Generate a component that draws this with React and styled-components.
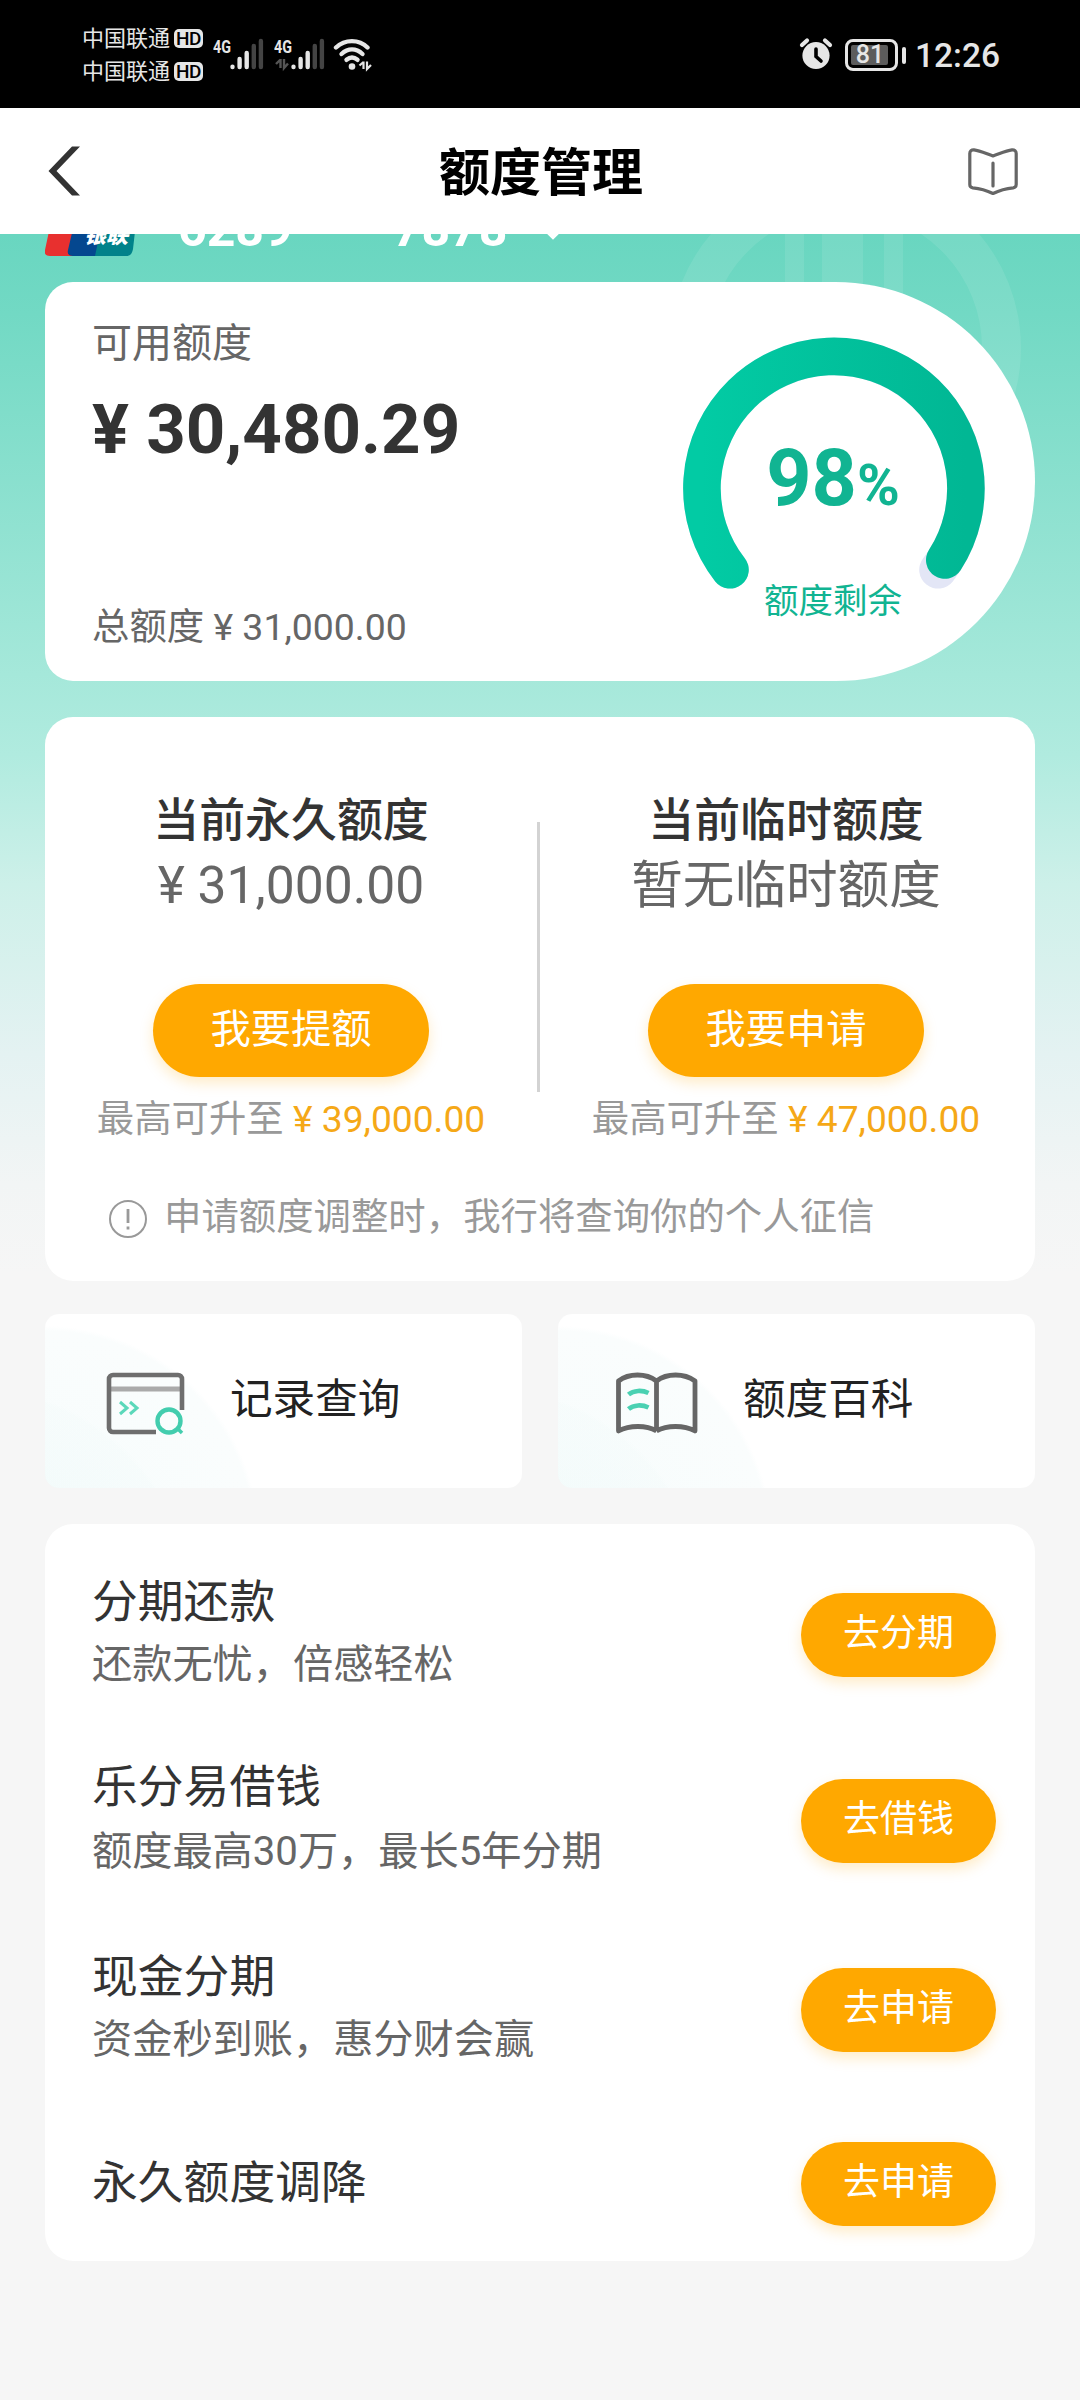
import React from 'react';
import styled, { createGlobalStyle } from 'styled-components';

const GlobalStyle = createGlobalStyle`
  * {
    box-sizing: border-box;
  }

  body {
    margin: 0;
    background: #f6f6f6;
    font-family: Roboto, 'Noto Sans CJK SC', sans-serif;
    color: #333;
  }
`;

const Page = styled.div`
  width: 1080px;
  height: 2400px;
  overflow: hidden;
  background: #f6f6f6;
`;

/* ---------- status bar ---------- */

const StatusBar = styled.div`
  display: flex;
  justify-content: space-between;
  height: 108px;
  padding: 0 80px 0 82px;
  background: #000;
  color: #e6e6e6;
`;

const StatusGroup = styled.div`
  display: flex;
  align-items: flex-start;
`;

const Carriers = styled.div`
  padding-top: 22px;
`;

const Carrier = styled.div`
  display: flex;
  align-items: center;
  gap: 4px;
  height: 33px;
  font-size: 22px;
  line-height: 33px;
`;

const HdBadge = styled.span`
  display: flex;
  align-items: center;
  justify-content: center;
  width: 29px;
  height: 19px;
  border-radius: 5px;
  background: #e6e6e6;
  color: #000;
  font-size: 19px;
  font-weight: 500;
  line-height: 19px;
  letter-spacing: -0.5px;
`;

const StatusIcon = styled.svg`
  display: block;
  margin-top: ${(p) => p.$top}px;
  margin-left: ${(p) => p.$left || 0}px;
`;

const Battery = styled.div`
  display: flex;
  align-items: center;
  gap: 4px;
  margin: 39px 0 0 12px;

  &::after {
    content: '';
    width: 4px;
    height: 17px;
    border-radius: 2px;
    background: #e6e6e6;
  }
`;

const BatteryBody = styled.div`
  width: 53px;
  height: 32px;
  padding: 3px;
  border: 3px solid #e6e6e6;
  border-radius: 8px;
`;

const BatteryLevel = styled.div`
  width: 37px;
  height: 20px;
  padding-left: 1px;
  border-radius: 2px;
  background: #5c5c5c;
  font-size: 25px;
  font-weight: 500;
  line-height: 20px;
  text-align: center;
`;

const Clock = styled.div`
  margin: 35px 0 0 9px;
  font-size: 33.5px;
  font-weight: 500;
  line-height: 42px;
`;

/* ---------- header ---------- */

const Header = styled.header`
  display: flex;
  align-items: center;
  justify-content: space-between;
  height: 126px;
  padding: 0 62px 0 48px;
  background: #fff;
`;

const HeaderTitle = styled.h1`
  margin: 5px 0 0 33px;
  color: #000;
  font-size: 51px;
  font-weight: 600;
  line-height: 70px;
`;

/* ---------- body ---------- */

const Body = styled.main`
  position: relative;
  height: 2166px;
  padding: 0 45px;
  overflow: hidden;
  background: linear-gradient(
    #69d6c0 0,
    #72d9c4 80px,
    #a5e8da 440px,
    #b0ebdf 520px,
    #cdf0e9 650px,
    #e4f2f2 820px,
    #f2f5f5 950px,
    #f6f6f6 1040px
  );
`;

const Watermark = styled.svg`
  position: absolute;
  top: 0;
  right: 50px;
`;

const CardNumberRow = styled.div`
  position: relative;
  display: flex;
  align-items: flex-end;
  height: 56px;
  margin-top: -33px;
  margin-bottom: 25px;
  color: #fff;
  font-size: 50px;
  font-weight: 700;
  line-height: 56px;
`;

const CardDigits = styled.span`
  margin-left: ${(p) => p.$gap}px;
`;

const UnionPay = styled.svg`
  display: block;
`;

const Chevron = styled.svg`
  margin: 0 0 17px 34px;
`;

const Card = styled.section`
  position: relative;
  border-radius: 28px;
  background: #fff;
`;

const AvailableCard = styled(Card)`
  display: flex;
  justify-content: space-between;
  height: 399px;
  padding: 32px 49px 29px 47px;
  border-radius: 28px 200px 200px 28px;
`;

const AvailableInfo = styled.div`
  display: flex;
  flex-direction: column;
`;

const Label = styled.div`
  color: #666;
  font-size: 40px;
  line-height: 60px;
`;

const Available = styled.div`
  margin-top: 16px;
  font-size: 69px;
  font-weight: 700;
  line-height: 80px;
`;

const Total = styled.div`
  margin-top: auto;
  color: #666;
  font-size: 37.4px;
  line-height: 50px;
`;

const GaugeBox = styled.div`
  position: relative;
  width: 304px;
  height: 304px;
  margin-top: 22px;
`;

const GaugeText = styled.div`
  position: absolute;
  top: 96px;
  left: -1px;
  width: 100%;
  color: #11b492;
  text-align: center;
`;

const Percent = styled.div`
  font-size: 79px;
  font-weight: 700;
  line-height: 92px;

  small {
    font-size: 58px;
    font-weight: 700;
  }
`;

const GaugeLabel = styled.div`
  margin-top: 47px;
  font-size: 34.5px;
  line-height: 46px;
`;

const LimitCard = styled(Card)`
  height: 564px;
  margin-top: 36px;
  padding-top: 73px;
`;

const Columns = styled.div`
  display: flex;
  padding-right: 3px;
`;

const Column = styled.div`
  display: flex;
  flex: 1;
  flex-direction: column;
  align-items: center;
`;

const Divider = styled.div`
  width: 3px;
  height: 270px;
  margin-top: 32px;
  background: #d3d3d3;
`;

const ColumnTitle = styled.div`
  font-size: 45.9px;
  font-weight: 500;
  line-height: 60px;
`;

const ColumnValue = styled.div`
  margin-top: 1px;
  color: #666;
  font-size: 51.6px;
  line-height: 70px;
`;

const Button = styled.button`
  width: ${(p) => (p.$large ? 276 : 195)}px;
  height: ${(p) => (p.$large ? 93 : 84)}px;
  padding: 0 0 11px;
  border: 0;
  border-radius: 47px;
  background: #ffa800;
  box-shadow: 0 6px 14px rgba(255, 168, 0, 0.22);
  color: #fff;
  font-family: inherit;
  font-size: ${(p) => (p.$large ? 40.3 : 37)}px;
`;

const ColumnButton = styled(Button)`
  margin-top: 63px;
`;

const Hint = styled.div`
  margin-top: 17px;
  color: #999;
  font-size: 37.4px;
  line-height: 50px;
  white-space: nowrap;

  b {
    color: #f5a817;
    font-size: 37.2px;
    font-weight: 400;
  }
`;

const Note = styled.div`
  display: flex;
  align-items: center;
  gap: 17px;
  margin: 48px 0 0 64px;
  color: #999;
  font-size: 37.4px;
  line-height: 50px;
`;

const NoteIcon = styled.svg`
  margin-top: 4px;
`;

const Tiles = styled.div`
  display: grid;
  grid-template-columns: 1fr 1fr;
  gap: 36px;
  margin-top: 33px;
`;

const Tile = styled.div`
  display: flex;
  align-items: center;
  gap: 44px;
  height: 174px;
  padding-left: 57px;
  border-radius: 14px;
  background:
    radial-gradient(circle at -70px 290px, rgba(232, 248, 246, 0.45) 0, rgba(240, 250, 249, 0.25) 212px, transparent 216px),
    radial-gradient(circle at 0 226px, #f6fcfc 0, #fafdfd 209px, #fff 214px);
  color: #222;
  font-size: 42.6px;

  svg {
    margin-top: 5px;
  }
`;

const TileName = styled.span`
  margin-top: -11px;
`;

const List = styled(Card)`
  height: 737px;
  margin-top: 36px;
  padding: 18px 39px 0 47px;
`;

const Row = styled.div`
  display: flex;
  align-items: center;
  justify-content: space-between;
  height: ${(p) => p.$height}px;
`;

const RowTitle = styled.div`
  font-size: 45.8px;
  line-height: 62px;
`;

const RowText = styled.div`
  margin-top: ${(p) => p.$gap}px;
  margin-bottom: 4px;
  color: #666;
  font-size: 40.2px;
  line-height: 60px;
`;

const limits = [
  { title: '当前永久额度', value: '¥ 31,000.00', action: '我要提额', max: '¥ 39,000.00' },
  { title: '当前临时额度', value: '暂无临时额度', action: '我要申请', max: '¥ 47,000.00' },
];

const services = [
  { title: '分期还款', text: '还款无忧，倍感轻松', action: '去分期', height: 186, gap: 1 },
  { title: '乐分易借钱', text: '额度最高30万，最长5年分期', action: '去借钱', height: 186, gap: 3 },
  { title: '现金分期', text: '资金秒到账，惠分财会赢', action: '去申请', height: 192, gap: 1 },
  { title: '永久额度调降', action: '去申请', height: 156 },
];

function Signal({ left, data }) {
  return (
    <StatusIcon $top={36} $left={left} width="52" height="36" viewBox="0 0 52 36">
      <text x="0" y="17" fontSize="18.5" fontWeight="700" fill="#e6e6e6" textLength="18" lengthAdjust="spacingAndGlyphs">
        4G
      </text>
      {data && <path d="M6.500 23v9M6.500 23.500l-4.500 4.500M10 23v9l4-4.500" stroke="#555" strokeWidth="2.400" fill="none" />}
      <g strokeWidth="4.400" strokeLinecap="round" stroke="#e6e6e6">
        <path d="M19.500 30.800v.2M26.600 23v8M33.700 17v14" />
        <path d="M40.800 10v21M47.900 5v26" stroke="#444" />
      </g>
    </StatusIcon>
  );
}

function Gauge() {
  return (
    <svg width="304" height="304" viewBox="0 0 304 304">
      <defs>
        <linearGradient id="arc" x1="0" x2="1">
          <stop offset="0" stopColor="#02cba4" />
          <stop offset="1" stopColor="#01b794" />
        </linearGradient>
      </defs>
      <g fill="none" strokeWidth="37.6" strokeLinecap="round">
        <path d="M48 233.8A132 132 0 1 1 256 233.8" stroke="#e3e6f6" />
        <path d="M48 233.8A132 132 0 1 1 262.8 224" stroke="url(#arc)" />
      </g>
    </svg>
  );
}

function RecordIcon() {
  return (
    <svg width="84" height="68" viewBox="0 0 84 68" fill="none">
      <path d="M7 19h72" stroke="#aaa" strokeWidth="5" />
      <path d="M54 62H11a4 4 0 0 1-4-4V9a4 4 0 0 1 4-4h65a4 4 0 0 1 4 4v31" stroke="#6e6e6e" strokeWidth="4.600" />
      <path d="M18 32l7 6-7 6M28 32l7 6-7 6" stroke="#5bd8ba" strokeWidth="3" />
      <circle cx="67" cy="51" r="11.500" stroke="#43cdae" strokeWidth="4.400" />
      <path d="M75 58l5 5" stroke="#43cdae" strokeWidth="3.500" />
    </svg>
  );
}

function WikiIcon() {
  return (
    <svg width="84" height="68" viewBox="0 0 84 68" fill="none">
      <path
        d="M41.500 11C31 3 14 3 3.500 11v50c11-6 28-6 38 0M41.500 11C52 3 69 3 80 11v50c-11-6-28-6-38.500 0M41.500 11v50"
        stroke="#666"
        strokeWidth="4.800"
        strokeLinejoin="round"
      />
      <path d="M13.500 24.500c5-4.500 14-4.500 20-1.500M13.500 39c5-4.500 14-4.500 20-1.500" stroke="#4ad1b2" strokeWidth="4.600" />
    </svg>
  );
}

export default function App() {
  return (
    <Page>
      <GlobalStyle />
      <StatusBar>
        <StatusGroup>
          <Carriers>
            <Carrier>
              中国联通 <HdBadge>HD</HdBadge>
            </Carrier>
            <Carrier>
              中国联通 <HdBadge>HD</HdBadge>
            </Carrier>
          </Carriers>
          <Signal left={10} />
          <Signal left={9} data />
          <StatusIcon $top={37} $left={7} width="40" height="36" viewBox="0 0 40 36">
            <g fill="none" stroke="#e6e6e6" strokeWidth="4.400" strokeLinecap="round">
              <path d="M3 10.500C12 2 26 2 34.500 10.500" />
              <path d="M8.500 17C15 11 23 11 29.500 17" />
              <path d="M13.500 22.800C17 20 21 20 24.500 22.800" />
            </g>
            <circle cx="19" cy="29.500" r="3.300" fill="#e6e6e6" />
            <path d="M30.500 24.500v7.500M30.500 25l-4 3.500M34 24.500V32l4-4" stroke="#e6e6e6" strokeWidth="2.200" fill="none" />
          </StatusIcon>
        </StatusGroup>
        <StatusGroup>
          <StatusIcon $top={37} width="34" height="34" viewBox="0 0 34 34">
            <circle cx="17" cy="18.500" r="13.600" fill="#e6e6e6" />
            <path d="M3 8l5-4.500M31 8l-5-4.500" stroke="#e6e6e6" strokeWidth="4.200" strokeLinecap="round" />
            <path d="M17 12v7.500l5 4.500" fill="none" stroke="#000" strokeWidth="3.600" strokeLinecap="round" />
          </StatusIcon>
          <Battery>
            <BatteryBody>
              <BatteryLevel>81</BatteryLevel>
            </BatteryBody>
          </Battery>
          <Clock>12:26</Clock>
        </StatusGroup>
      </StatusBar>

      <Header>
        <svg width="33" height="50" viewBox="0 0 33 50">
          <path d="M.5 25L24 .5h8L8.500 25 32 49.500h-8z" fill="#333" />
        </svg>
        <HeaderTitle>额度管理</HeaderTitle>
        <svg width="50" height="48" viewBox="0 0 50 48" fill="none" stroke="#666" strokeWidth="3.200" strokeLinecap="round" strokeLinejoin="round">
          <path d="M25 9C19 7 12 3.500 6 2.800 3.500 2.600 1.800 4 1.800 6.500v31c0 2 1 3 3 3.300C13 41.500 18 43 25 46.500 32 43 37 41.500 45.200 40.800c2-.3 3-1.300 3-3.300v-31c0-2.500-1.700-3.900-4.200-3.700C38 3.500 31 7 25 9z" />
          <path d="M25 16v23" />
        </svg>
      </Header>

      <Body>
        <Watermark width="360" height="310" viewBox="0 0 360 310">
          <g opacity="0.09">
            <circle cx="175" cy="114" r="156.500" fill="none" stroke="#fff" strokeWidth="39" />
            <path d="M115 0h19v110h-19zM152 0h41v110h-41zM214 0h19v110h-19z" fill="#fff" />
          </g>
        </Watermark>
        <CardNumberRow>
          <UnionPay width="93" height="58" viewBox="0 0 93 58">
            <path d="M14 0h30L32 57H5c-4 0-6-2-5-6L10 4c.8-3 2-4 4-4z" fill="#e8302f" />
            <path d="M40 0h30L60 57H28c-4 0-6-2-5-6L34 4c.8-3 3-4 6-4z" fill="#04478f" />
            <path d="M62 0h26c4 0 6 2 5 6L88 50c-1 5-3 7-7 7H50z" fill="#01828a" />
            <text x="39" y="44" fontSize="22" fontWeight="900" fontStyle="italic" fill="#fff">
              银联
            </text>
          </UnionPay>
          <CardDigits $gap={40}>6289</CardDigits>
          <CardDigits $gap={100}>7878</CardDigits>
          <Chevron width="22" height="14" viewBox="0 0 22 14">
            <path d="M2 2l9 9 9-9" fill="none" stroke="#fff" strokeWidth="4" />
          </Chevron>
        </CardNumberRow>

        <AvailableCard>
          <AvailableInfo>
            <Label>可用额度</Label>
            <Available>¥ 30,480.29</Available>
            <Total>总额度 ¥ 31,000.00</Total>
          </AvailableInfo>
          <GaugeBox>
            <Gauge />
            <GaugeText>
              <Percent>
                98<small>%</small>
              </Percent>
              <GaugeLabel>额度剩余</GaugeLabel>
            </GaugeText>
          </GaugeBox>
        </AvailableCard>

        <LimitCard>
          <Columns>
            {limits.map((limit, i) => (
              <React.Fragment key={limit.title}>
                {i > 0 && <Divider />}
                <Column>
                  <ColumnTitle>{limit.title}</ColumnTitle>
                  <ColumnValue>{limit.value}</ColumnValue>
                  <ColumnButton $large>{limit.action}</ColumnButton>
                  <Hint>
                    最高可升至 <b>{limit.max}</b>
                  </Hint>
                </Column>
              </React.Fragment>
            ))}
          </Columns>
          <Note>
            <NoteIcon width="38" height="38" viewBox="0 0 38 38" fill="none" stroke="#999" strokeWidth="2">
              <circle cx="19" cy="19" r="18" />
              <path d="M19 9v14M19 26.500v3" strokeWidth="2.800" />
            </NoteIcon>
            申请额度调整时，我行将查询你的个人征信
          </Note>
        </LimitCard>

        <Tiles>
          <Tile>
            <RecordIcon />
            <TileName>记录查询</TileName>
          </Tile>
          <Tile>
            <WikiIcon />
            <TileName>额度百科</TileName>
          </Tile>
        </Tiles>

        <List>
          {services.map((item) => (
            <Row key={item.title} $height={item.height}>
              <div>
                <RowTitle>{item.title}</RowTitle>
                {item.text && <RowText $gap={item.gap}>{item.text}</RowText>}
              </div>
              <Button>{item.action}</Button>
            </Row>
          ))}
        </List>
      </Body>
    </Page>
  );
}
